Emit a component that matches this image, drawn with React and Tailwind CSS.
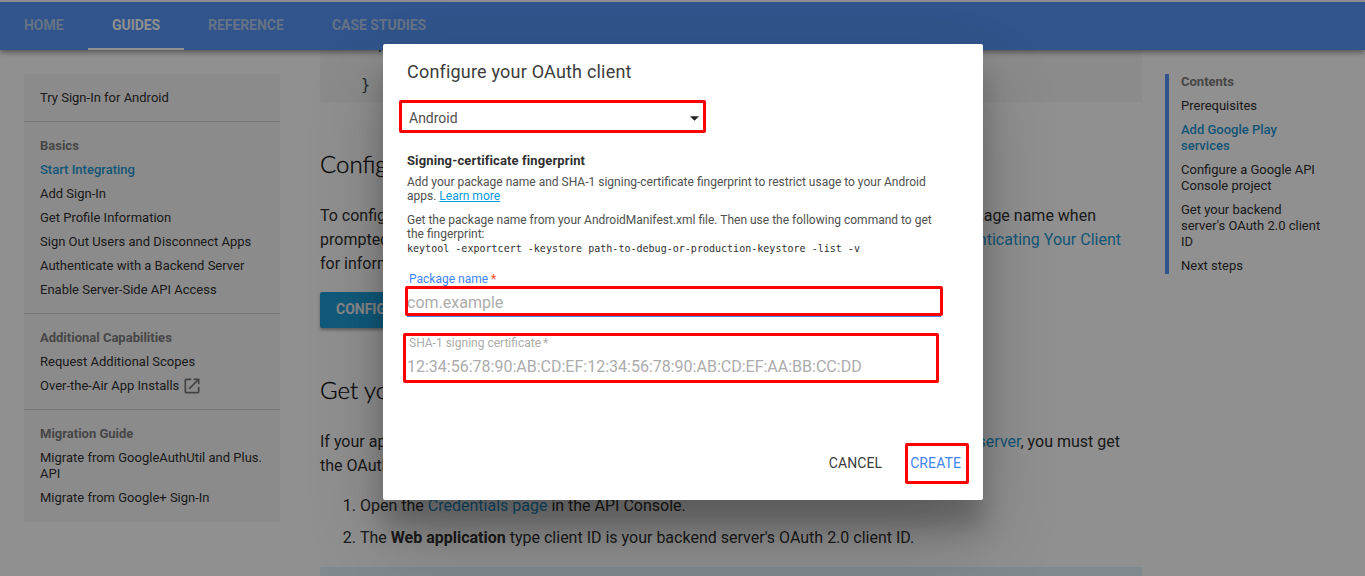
import React from "react";

const tabs = [
  { label: "HOME", width: "w-[88px]" },
  { label: "GUIDES", width: "w-[96px]", active: true },
  { label: "REFERENCE", width: "w-[124px]" },
  { label: "CASE STUDIES", width: "w-[142px]" },
];

function Header() {
  return (
    <header className="relative z-10 h-[50px] shrink-0 border-t-2 border-[#fafafa] bg-[#5595f6] shadow-[0_2px_6px_rgba(0,0,0,0.45)]">
      <nav className="flex h-12 text-sm font-bold tracking-[-0.05px] whitespace-nowrap">
        {tabs.map((t) => (
          <a
            key={t.label}
            className={`${t.width} flex items-center border-b-2 pl-6 ${
              t.active ? "border-white text-white" : "border-transparent text-[#b4cbee]"
            }`}
          >
            {t.label}
          </a>
        ))}
      </nav>
    </header>
  );
}

function OpenIcon() {
  return (
    <svg viewBox="0 0 24 24" className="ml-[3px] h-5 w-5 fill-[#757575]">
      <path d="M19 19H5V5h6V3H5c-1.1 0-2 .9-2 2v14c0 1.1.9 2 2 2h14c1.1 0 2-.9 2-2v-6h-2v6zM14 3v2h3.6l-9.8 9.8 1.4 1.4L19 6.4V10h2V3h-7z" />
    </svg>
  );
}

function Section({ title, children, last }) {
  return (
    <section
      className={`flex flex-col gap-2 px-4 pt-4 ${
        last ? "pb-4" : "border-b border-[#d2d2d2] pb-[15px]"
      }`}
    >
      {title && <h3 className="font-bold text-[#7c7c7c]">{title}</h3>}
      {children}
    </section>
  );
}

function Sidebar() {
  return (
    <aside className="mt-6 ml-6 w-64 shrink-0 self-start bg-[#f7f7f7] text-[13px] leading-4 text-[#303030]">
      <Section>
        <a>Try Sign-In for Android</a>
      </Section>
      <Section title="Basics">
        <a className="font-medium text-[#1f97d4]">Start Integrating</a>
        <a>Add Sign-In</a>
        <a>Get Profile Information</a>
        <a>Sign Out Users and Disconnect Apps</a>
        <a>Authenticate with a Backend Server</a>
        <a>Enable Server-Side API Access</a>
      </Section>
      <Section title="Additional Capabilities">
        <a>Request Additional Scopes</a>
        <a className="flex h-4 items-center whitespace-nowrap">
          Over-the-Air App Installs
          <OpenIcon />
        </a>
      </Section>
      <Section title="Migration Guide" last>
        <a>
          Migrate from GoogleAuthUtil and Plus.
          <br />
          API
        </a>
        <a>Migrate from Google+ Sign-In</a>
      </Section>
    </aside>
  );
}

function Split({ left, right, width }) {
  return (
    <span className={`flex justify-between ${width}`}>
      <span>{left}</span>
      <span>{right}</span>
    </span>
  );
}

const link = "text-[#1f97d4]";

function Article() {
  return (
    <article className="ml-10 w-[822px] shrink-0 text-base leading-6 whitespace-nowrap text-[#303030]">
      <pre className="h-[52px] overflow-hidden bg-[#f7f7f7] pl-[42px] font-['DejaVu_Sans_Mono',monospace] text-[15px] leading-5 text-[#37474f]">
        <span className="-mt-[15px] block pl-3.5">;</span>
        <span className="-ml-px mt-5 block">{"}"}</span>
      </pre>
      <h2 className="mt-[46px] font-['Lato',sans-serif] text-2xl leading-8 font-light text-black [-webkit-text-stroke:0.3px_#202020]">
        Configure
      </h2>
      <p className="mt-6">
        <Split width="w-[776px]" left="To configure" right="package name when" />
        <Split
          width="w-[801px]"
          left="prompted."
          right={<span className={link}>Authenticating Your Client</span>}
        />
        for information.
      </p>
      <button className="mt-4 block h-9 rounded-xs bg-[#1f9fdc] px-4 pb-0.5 text-sm font-bold text-[#f0f0f0] shadow-[0_2px_3px_rgba(0,0,0,0.35)]">
        CONFIGURE
      </button>
      <h2 className="mt-[46px] font-['Lato',sans-serif] text-2xl leading-8 font-light text-black [-webkit-text-stroke:0.3px_#202020]">
        Get your client ID
      </h2>
      <p className="mt-6">
        <Split
          width="w-[800px]"
          left="If your app"
          right={
            <>
              <span className={link}>backend server</span>, you must get
            </>
          }
        />
        the OAuth 2.0 client ID
      </p>
      <ol className="mt-4 flex list-decimal flex-col gap-2 pl-10">
        <li>
          Open the <span className={link}>Credentials page</span> in the API Console.
        </li>
        <li>
          The <b>Web application</b> type client ID is your backend server's OAuth 2.0 client ID.
        </li>
      </ol>
      <div className="mt-[17px] h-10 bg-[#e1f5fe]" />
    </article>
  );
}

function Contents() {
  return (
    <nav className="mt-6 ml-[23px] flex h-[200px] w-44 shrink-0 flex-col gap-2 border-l-4 border-[#5595f6] pl-3 text-[13px] leading-4 text-[#303030]">
      <b className="text-[#7c7c7c]">Contents</b>
      <a>Prerequisites</a>
      <a className="font-medium text-[#1f97d4]">
        Add Google Play
        <br />
        services
      </a>
      <a>
        Configure a Google API
        <br />
        Console project
      </a>
      <a>
        Get your backend
        <br />
        server's OAuth 2.0 client
        <br />
        ID
      </a>
      <a>Next steps</a>
    </nav>
  );
}

function Highlight({ className }) {
  return (
    <span className={`pointer-events-none absolute rounded-xs border-3 border-[#ff0000] ${className}`} />
  );
}

function Dialog() {
  return (
    <div
      role="dialog"
      className="relative flex h-[456px] w-[600px] flex-col rounded-xs bg-white px-6 whitespace-nowrap text-[#303030] shadow-[0_27px_24px_rgba(0,0,0,0.2),0_40px_77px_rgba(0,0,0,0.22)]"
    >
      <h1 className="mt-4 text-lg leading-6 tracking-[0.2px] text-[#3c3c3c]">Configure your OAuth client</h1>
      <div className="mt-[22px] flex h-6 w-[294px] items-center justify-between pr-0.5 pl-0.5 text-sm text-[#505050]">
        Android
        <svg viewBox="0 0 10 5" className="h-[5px] w-[9px] fill-[#212121]">
          <path d="M0 0h10L5 5z" />
        </svg>
      </div>
      <h2 className="mt-[23px] text-[13px] leading-4 font-bold tracking-[0.12px]">
        Signing-certificate fingerprint
      </h2>
      <p className="mt-1.5 text-xs leading-[14px] text-[#505050]">
        Add your package name and SHA-1 signing-certificate fingerprint to restrict usage to your Android
        <br />
        apps. <a className="text-[#039be5] underline">Learn more</a>
      </p>
      <p className="mt-2.5 text-xs leading-[14px] text-[#505050]">
        Get the package name from your AndroidManifest.xml file. Then use the following command to get
        <br />
        the fingerprint:
      </p>
      <code className="mt-px font-['DejaVu_Sans_Mono',monospace] text-[10.04px] leading-[14px] text-[#303030]">
        keytool -exportcert -keystore path-to-debug-or-production-keystore -list -v
      </code>
      <label className="mt-[15px] pl-0.5 text-xs leading-4 text-[#4285f4]">
        Package name<span className="ml-[3px] text-[#f4511e]">*</span>
      </label>
      <div className="mt-px flex h-[29px] w-[534px] items-center border-b-2 border-[#4285f4] pt-0.5 text-base text-[#acacac]">
        com.example
      </div>
      <label className="mt-[18px] pl-0.5 text-xs leading-4 text-[#acacac]">
        SHA-1 signing certificate<span className="ml-0.5">*</span>
      </label>
      <div className="mt-px flex h-[30px] w-[534px] items-center border-b border-[#e0e0e0] text-base text-[#acacac]">
        12:34:56:78:90:AB:CD:EF:12:34:56:78:90:AB:CD:EF:AA:BB:CC:DD
      </div>
      <div className="mt-[69px] -mr-0.5 flex justify-end gap-7 text-sm leading-6 tracking-[0.1px]">
        <button className="text-[#3c3c3c]">CANCEL</button>
        <button className="text-[#4285f4]">CREATE</button>
      </div>
      <Highlight className="top-14 left-4 h-[33px] w-[307px]" />
      <Highlight className="top-[242px] left-[22px] h-[30px] w-[538px]" />
      <Highlight className="top-[289px] left-5 h-[50px] w-[536px]" />
      <Highlight className="top-[399px] left-[522px] h-[41px] w-16" />
    </div>
  );
}

export default function App() {
  return (
    <div className="relative h-[576px] w-[1365px] overflow-hidden bg-white font-['Roboto',sans-serif]">
      <div className="flex h-full flex-col">
        <Header />
        <main className="flex">
          <Sidebar />
          <Article />
          <Contents />
        </main>
      </div>
      <div className="absolute inset-0 z-20 flex items-start justify-center bg-black/43.5 pt-11 pl-px">
        <Dialog />
      </div>
    </div>
  );
}
